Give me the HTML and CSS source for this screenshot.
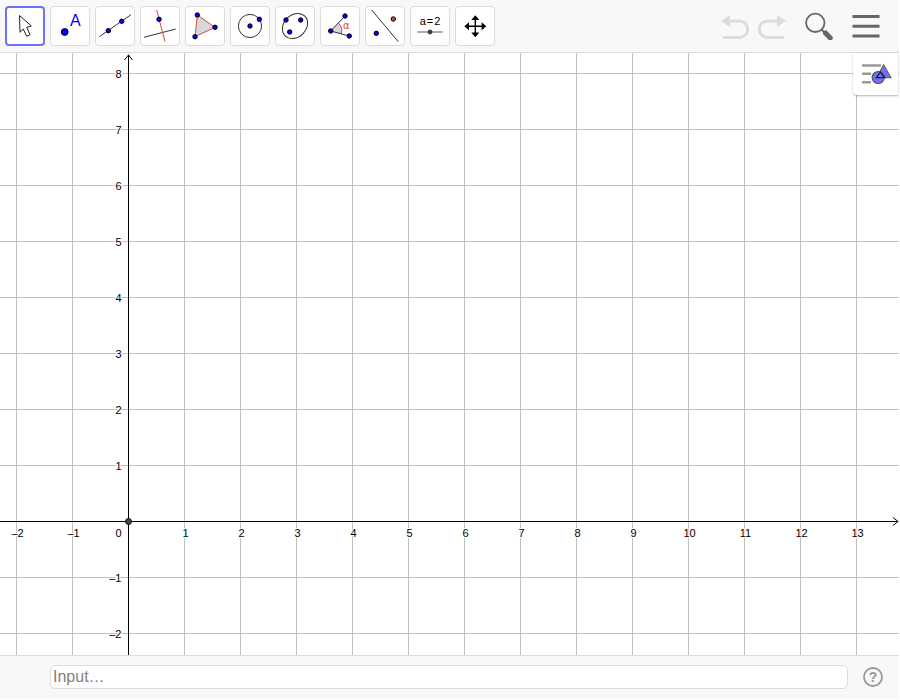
FILE: index.html
```html
<!DOCTYPE html>
<html lang="en">
<head>
    <meta charset="UTF-8">
    <meta name="viewport" content="width=device-width, initial-scale=1.0">
    <title>Geometry</title>
    <link rel="stylesheet" href="styles.css">
</head>
<body>
    <header class="toolbar">
        <div class="tools">
            <button class="tool selected" aria-label="Move">
                <svg viewBox="0 0 32 32"><path d="M10.5 5.5 L11 22.3 L14.2 19 L17.6 26.2 L21 24.8 L17.8 17.4 L22.3 16 Z" fill="#fff" stroke="#222"/></svg>
            </button>
            <button class="tool" aria-label="Point">
                <svg viewBox="0 0 32 32"><circle class="dot" cx="10.7" cy="22" r="3.4"/><text class="big-a" x="16" y="16">A</text></svg>
            </button>
            <button class="tool" aria-label="Line">
                <svg viewBox="0 0 32 32"><path class="line" d="M.3 26.7 L32 4.7"/><circle class="dot" cx="9.3" cy="20.7" r="2.2"/><circle class="dot" cx="22.7" cy="11.3" r="2.2"/></svg>
            </button>
            <button class="tool" aria-label="Perpendicular line">
                <svg viewBox="0 0 32 32"><path class="line" d="M0 27.3 L31.7 19"/><path class="line red" d="M12.7 0 L21 31.7"/><circle class="dot" cx="15" cy="9.3" r="2.2"/></svg>
            </button>
            <button class="tool" aria-label="Polygon">
                <svg viewBox="0 0 32 32"><path class="line red filled" d="M8.3 5 L26 17.3 L6 26.7 Z"/><circle class="dot" cx="8.3" cy="5" r="2.2"/><circle class="dot" cx="26" cy="17.3" r="2.2"/><circle class="dot" cx="6" cy="26.7" r="2.2"/></svg>
            </button>
            <button class="tool" aria-label="Circle with center">
                <svg viewBox="0 0 32 32"><circle class="line" cx="16" cy="16" r="11.6"/><circle class="dot" cx="16" cy="16" r="2.2"/><circle class="dot" cx="25.3" cy="9.3" r="2.2"/></svg>
            </button>
            <button class="tool" aria-label="Ellipse">
                <svg viewBox="0 0 32 32"><ellipse class="line" cx="16" cy="16" rx="14" ry="11" transform="rotate(-45 16 16)"/><circle class="dot" cx="7" cy="10" r="2.2"/><circle class="dot" cx="21.7" cy="10" r="2.2"/><circle class="dot" cx="10.7" cy="22" r="2.2"/></svg>
            </button>
            <button class="tool" aria-label="Angle">
                <svg viewBox="0 0 32 32"><path fill="#d8d8d8" d="M6.7 21 L14.3 13 A11 11 0 0 1 17.3 23.9 Z"/><path class="line red" d="M14.3 13 A11 11 0 0 1 17.3 23.9"/><path class="line" d="M21 6 L6.7 21 L25.3 26"/><circle class="dot" cx="21" cy="6" r="2.2"/><circle class="dot" cx="6.7" cy="21" r="2.2"/><circle class="dot" cx="25.3" cy="26" r="2.2"/><text class="alpha" x="19" y="19">α</text></svg>
            </button>
            <button class="tool" aria-label="Reflect about line">
                <svg viewBox="0 0 32 32"><path class="line" d="M2.7 0 L29.3 31.7"/><circle class="dot" cx="7.3" cy="23.3" r="2.2"/><circle class="dot red-dot" cx="24.3" cy="9" r="2.2"/></svg>
            </button>
            <button class="tool" aria-label="Slider">
                <svg viewBox="0 0 32 32"><text class="slider-text" x="16" y="15">a&#8202;=&#8202;2</text><path d="M3.3 22 H28.7" stroke="#888" stroke-width="1.4"/><circle cx="16" cy="22" r="2" fill="#444" stroke="#222" stroke-width=".8"/></svg>
            </button>
            <button class="tool" aria-label="Move graphics view">
                <svg viewBox="0 0 32 32"><path d="M16.3 8 V25 M8 16.3 H25" stroke="#000" stroke-width="1.4"/><path d="M16.3 5.3 L20.3 10 H12.3 Z M16.3 27.3 L20.3 22.6 H12.3 Z M5.3 16.3 L10 12.3 V20.3 Z M27.3 16.3 L22.6 12.3 V20.3 Z"/></svg>
            </button>
        </div>
        <div class="actions">
            <button class="action" aria-label="Undo" disabled>
                <svg viewBox="0 0 28 28"><path d="M7 9 H18.5 A8.2 8.2 0 0 1 18.5 25.4 H2" fill="none" stroke="#dcdcdc" stroke-width="3"/><path d="M0 9 L9 3 V15 Z" fill="#dcdcdc"/></svg>
            </button>
            <button class="action" aria-label="Redo" disabled>
                <svg viewBox="0 0 28 28"><path d="M21 9 H9.5 A8.2 8.2 0 0 0 9.5 25.4 H26" fill="none" stroke="#dcdcdc" stroke-width="3"/><path d="M28 9 L19 3 V15 Z" fill="#dcdcdc"/></svg>
            </button>
            <button class="action" aria-label="Search">
                <svg viewBox="0 0 28 28"><circle cx="10.3" cy="10.8" r="9.2" fill="none" stroke="#666" stroke-width="1.8"/><path d="M16.5 17.5 L19.5 20.5" stroke="#666" stroke-width="2"/><path d="M20.5 21 L25.3 26" stroke="#666" stroke-width="5" stroke-linecap="round"/></svg>
            </button>
            <button class="action" aria-label="Menu">
                <svg viewBox="0 0 28 28"><path d="M.5 4.6 H27.5 M.5 14.3 H27.5 M.5 24 H27.5" stroke="#666" stroke-width="3"/></svg>
            </button>
        </div>
    </header>

    <main class="view">
        <svg class="plot" id="plot" role="img" aria-label="Graphics view"></svg>
        <button class="style-button" aria-label="Style bar">
            <svg viewBox="1 0 32 24"><path d="M3 3.5 H22 M3 11.7 H12 M3 20.3 H12" stroke="#999" stroke-width="2.4"/><path d="M24.7 3 L32 15.7 H17.4 Z" fill="#7070ff" stroke="#666" stroke-width="1.3"/><circle cx="19.2" cy="15.5" r="6" fill="#7070ff" stroke="#555" stroke-width="1.2"/><path d="M21.3 10 L17.4 15.7 H25.5 Z" fill="none" stroke="#222" stroke-width="1.3"/></svg>
        </button>
    </main>

    <footer class="input-bar">
        <input class="algebra-input" type="text" placeholder="Input…" aria-label="Input">
        <button class="help" aria-label="Help">
            <svg viewBox="0 0 20 20"><circle cx="10" cy="10" r="9" fill="none" stroke="#999" stroke-width="1.8"/><text class="help-mark" x="10" y="15">?</text></svg>
        </button>
    </footer>

    <script src="plot.js"></script>
</body>
</html>
```
FILE: styles.css
```css
* {
    box-sizing: border-box;
}

body {
    margin: 0;
    padding: 0 1px 1px 0;
    height: 100vh;
    display: flex;
    flex-direction: column;
    overflow: hidden;
    background: #fff;
    font-family: "Liberation Sans", Arial, sans-serif;
}

button {
    padding: 0;
    border: none;
    background: none;
    cursor: pointer;
}

svg {
    display: block;
}

.toolbar {
    display: flex;
    justify-content: space-between;
    align-items: center;
    padding: 6px 19px 6px 5px;
    background: #f8f8f8;
    border-bottom: 1px solid #dcdcdc;
}

.tools {
    display: flex;
    gap: 5px;
}

.tool {
    width: 40px;
    height: 40px;
    display: flex;
    align-items: center;
    justify-content: center;
    background: #fff;
    border: 1px solid #dcdcdc;
    border-radius: 4px;
}

.tool.selected {
    border: 2px solid #7070ff;
}

.tool svg {
    width: 32px;
    height: 32px;
    flex: none;
}

.line {
    fill: none;
    stroke: #333;
    stroke-width: 1;
}

.line.red {
    stroke: #d9483b;
}

.line.filled {
    fill: #d8d8d8;
}

.dot {
    fill: #00f;
    stroke: #000;
    stroke-width: 1;
}

.dot.red-dot {
    fill: #d9483b;
}

.big-a {
    font-size: 16px;
    fill: #00f;
}

.alpha {
    font-family: "DejaVu Sans", sans-serif;
    font-size: 10px;
    fill: #d9483b;
}

.slider-text {
    font-size: 11px;
    text-anchor: middle;
}

.actions {
    display: flex;
    gap: 19px;
}

.action {
    width: 28px;
    height: 28px;
}

.action:first-child {
    margin-right: -10px;
}

.view {
    position: relative;
    flex: 1;
    min-height: 0;
}

.plot {
    width: 100%;
    height: 100%;
}

.grid {
    stroke: #c0c0c0;
}

.axis {
    fill: none;
    stroke: #000;
}

.origin {
    fill: #444;
    stroke: #111;
}

.tick {
    font-size: 11px;
    fill: #000;
    stroke: #fff;
    stroke-width: 2px;
    paint-order: stroke;
}

.tick.x {
    text-anchor: middle;
}

.tick.y {
    text-anchor: end;
}

.style-button {
    position: absolute;
    top: 0;
    right: 1px;
    width: 45px;
    height: 42px;
    display: flex;
    align-items: center;
    justify-content: center;
    background: #fff;
    border-radius: 0 0 0 4px;
    box-shadow: 0 1px 2px rgba(0, 0, 0, .3);
}

.style-button svg {
    width: 32px;
    height: 24px;
}

.input-bar {
    display: flex;
    align-items: center;
    gap: 15px;
    padding: 9px 16px 10px 50px;
    background: #f8f8f8;
    border-top: 1px solid #dcdcdc;
}

.algebra-input {
    flex: 1;
    min-width: 0;
    height: 24px;
    padding: 0 2px;
    border: 1px solid #dcdcdc;
    border-radius: 5px;
    background: #fff;
    font-family: inherit;
    font-size: 16px;
    outline: none;
}

.algebra-input::placeholder {
    color: #808080;
}

.help,
.help svg {
    width: 20px;
    height: 20px;
}

.help-mark {
    font-size: 14px;
    font-weight: bold;
    fill: #999;
    text-anchor: middle;
}
```
FILE: plot.js
```js
var plot = document.getElementById("plot");
var unit = 56;

function add(tag, cls, attrs, text) {
    var el = document.createElementNS("http://www.w3.org/2000/svg", tag);
    el.setAttribute("class", cls);
    for (var key in attrs) {
        el.setAttribute(key, attrs[key]);
    }
    if (text !== undefined) {
        el.textContent = text;
    }
    plot.appendChild(el);
}

function label(n) {
    return n < 0 ? "–" + -n : "" + n;
}

function drawPlot() {
    var w = plot.clientWidth;
    var h = plot.clientHeight;
    // half pixels keep the 1px lines sharp
    var ox = 128.5;
    var oy = h - 133.5;
    var textY = Math.floor(oy);
    plot.textContent = "";

    var minX = Math.ceil(-ox / unit);
    var maxX = Math.floor((w - ox) / unit);
    var minY = Math.ceil((oy - h) / unit);
    var maxY = Math.floor(oy / unit);
    var n;

    // grid
    for (n = minX; n <= maxX; n++) {
        add("path", "grid", { d: "M" + (ox + n * unit) + " 0V" + h });
    }
    for (n = minY; n <= maxY; n++) {
        add("path", "grid", { d: "M0 " + (oy - n * unit) + "H" + w });
    }

    // axes with arrow heads
    add("path", "axis", { d: "M" + ox + " " + h + "V2m-4 5l4 -5l4 5" });
    add("path", "axis", { d: "M0 " + oy + "H" + (w - 1) + "m-5 -4l5 4l-5 4" });

    // numbers
    for (n = minX; n <= maxX; n++) {
        if (n !== 0) {
            add("text", "tick x", { x: ox + n * unit + 1, y: textY + 16 }, label(n));
        }
    }
    for (n = minY; n <= maxY; n++) {
        if (n !== 0) {
            add("text", "tick y", { x: ox - 7, y: textY - n * unit + 5 }, label(n));
        }
    }
    add("text", "tick y", { x: ox - 7, y: textY + 16 }, "0");
    add("circle", "origin", { cx: ox, cy: oy, r: 3 });
}

window.addEventListener("resize", drawPlot);
drawPlot();
```
